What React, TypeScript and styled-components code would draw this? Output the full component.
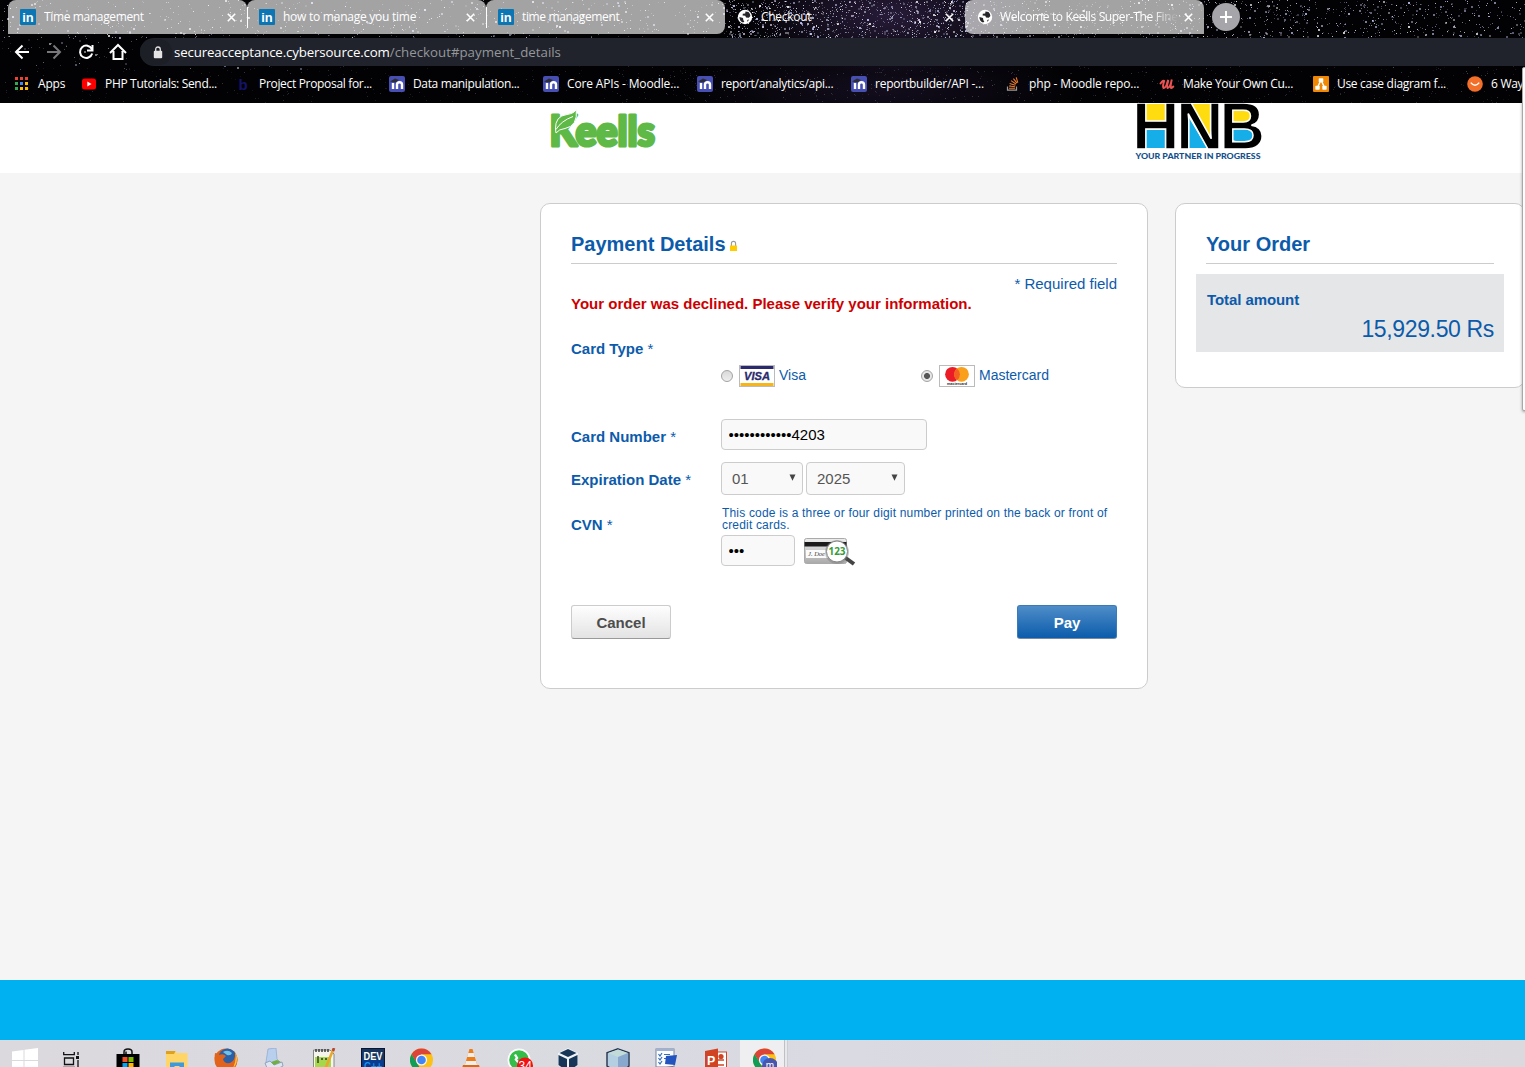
import React from "react";
import styled, { createGlobalStyle } from "styled-components";

const UI = '"Open Sans", "Noto Sans", sans-serif';
const BODY = '"Liberation Sans", Arial, sans-serif';
const BLUE = "#0c5bab";

const Global = createGlobalStyle`
  *, *::before, *::after { box-sizing: border-box; }
  body { margin: 0; background: #f5f5f5; font-family: ${BODY}; }
  svg { display: block; flex: none; }
`;

const Screen = styled.div`
  position: relative;
  width: 1525px;
  height: 1067px;
  display: flex;
  flex-direction: column;
  overflow: hidden;
`;

/* ---------- browser chrome ---------- */

const Chrome = styled.header`
  position: relative;
  height: 103px;
  flex: none;
  background: #020204;
  color: #fff;
  font-family: ${UI};
  display: flex;
  flex-direction: column;
  overflow: hidden;
`;

const Backdrop = styled.div`
  position: absolute;
  inset: 0;
  background:
    radial-gradient(ellipse 150px 60px at 890px 15px, rgba(70, 48, 100, 0.55), transparent),
    radial-gradient(ellipse 200px 50px at 880px 90px, rgba(30, 20, 45, 0.6), transparent);
`;

const TabStrip = styled.div`
  position: relative;
  display: flex;
  height: 34px;
  padding-left: 8px;
`;

const Tab = styled.div<{ $active?: boolean; $radius: string; $divider?: boolean }>`
  position: relative;
  width: ${(p) => (p.$active ? 240 : 239)}px;
  display: flex;
  align-items: center;
  padding: 0 11px 0 12px;
  border-radius: ${(p) => p.$radius};
  background: ${(p) => (p.$active ? "transparent" : "rgba(255,255,255,0.64)")};
  &::after {
    content: "";
    display: ${(p) => (p.$divider ? "block" : "none")};
    position: absolute;
    right: -1px;
    top: 7px;
    width: 1px;
    height: 21px;
    background: #fff;
  }
`;

const TabTitle = styled.span<{ $spacing: number; $fade?: boolean }>`
  flex: 1;
  margin-left: 8px;
  overflow: hidden;
  white-space: nowrap;
  font-size: 12px;
  line-height: 18px;
  letter-spacing: ${(p) => p.$spacing}px;
  ${(p) => p.$fade && "margin-left: 7px; margin-right: 4px; mask-image: linear-gradient(90deg, #000 84%, transparent 99%);"}
`;

const NewTab = styled.div`
  width: 28px;
  height: 28px;
  margin: 3px 0 0 8px;
  border-radius: 50%;
  background: #a5a5aa;
  display: grid;
  place-items: center;
`;

const Toolbar = styled.div`
  position: relative;
  display: flex;
  align-items: center;
  height: 28px;
  margin-top: 4px;
  padding-left: 13px;
`;

const NavButtons = styled.div`
  display: flex;
  gap: 14px;
  width: 127px;
`;

const Omnibox = styled.div`
  flex: 1;
  height: 28px;
  border-radius: 14px 0 0 14px;
  background: #20232b;
  display: flex;
  align-items: center;
`;

const LockChip = styled.div`
  width: 32px;
  height: 26px;
  padding-left: 4px;
  border-radius: 13px;
  background: #1c1f26;
  display: grid;
  place-items: center;
`;

const Url = styled.span`
  margin-left: 2px;
  font-size: 13.3px;
  line-height: 18px;
  letter-spacing: -0.15px;
  white-space: nowrap;
  color: #fff;
`;
const UrlPath = styled.span`
  color: #94979c;
  letter-spacing: 0;
`;

const Bookmarks = styled.div`
  position: relative;
  display: flex;
  align-items: center;
  height: 36px;
  padding-left: 14px;
`;

const Bookmark = styled.div<{ $width: number; $spacing: number }>`
  flex: none;
  width: ${(p) => p.$width}px;
  display: flex;
  align-items: center;
  gap: 8px;
  font-size: 12px;
  line-height: 18px;
  letter-spacing: ${(p) => p.$spacing}px;
  white-space: nowrap;
`;

/* ---------- checkout page ---------- */

const LogoBar = styled.div`
  height: 70px;
  flex: none;
  background: #fff;
  display: flex;
  align-items: flex-start;
  padding-left: 545px;
  gap: 470px;
`;

const Content = styled.main`
  flex: 1;
  background: #f5f5f5;
  display: flex;
  align-items: flex-start;
  gap: 27px;
  padding: 30px 0 0 540px;
`;

const Card = styled.section<{ $width: number; $height: number }>`
  flex: none;
  width: ${(p) => p.$width}px;
  height: ${(p) => p.$height}px;
  padding: 29px 30px 0;
  background: #fff;
  border: 1px solid #ccc;
  border-radius: 10px;
  color: ${BLUE};
  font-size: 15px;
`;

const Heading = styled.h2`
  margin: 0;
  height: 31px;
  border-bottom: 1px solid #ccc;
  display: flex;
  align-items: flex-start;
  gap: 3px;
  font-size: 20px;
  line-height: 23px;
  font-weight: 700;
`;

const LockSlot = styled.span`
  padding-top: 7px;
`;

const Required = styled.p`
  margin: 11px 0 0;
  text-align: right;
  line-height: 18px;
`;

const ErrorText = styled.p`
  margin: 2px 0 0;
  color: #cc0000;
  font-weight: 700;
  line-height: 18px;
  white-space: nowrap;
`;

const FormRow = styled.div<{ $height: number; $labelTop: number }>`
  display: grid;
  grid-template-columns: 150px 1fr;
  height: ${(p) => p.$height}px;
  > label { padding-top: ${(p) => p.$labelTop}px; }
`;

const Label = styled.label`
  font-weight: 700;
  line-height: 18px;
  white-space: nowrap;
`;
const Star = styled.span`
  font-weight: 400;
`;

const CardTypes = styled.div`
  display: grid;
  grid-template-columns: 200px 200px;
  align-items: start;
  padding-top: 52px;
`;

const CardOption = styled.div`
  display: flex;
  align-items: center;
  height: 22px;
  font-size: 14px;
  line-height: 20px;
`;

const CardName = styled.span`
  padding-left: 4px;
  margin-top: -2px;
`;

const Radio = styled.span<{ $checked?: boolean }>`
  width: 12px;
  height: 12px;
  margin-right: 6px;
  border: 1px solid #a3a3a3;
  border-radius: 50%;
  background: ${(p) =>
    p.$checked ? "radial-gradient(circle, #555 0 2.6px, #e6e6e6 3.4px)" : "linear-gradient(#d9d9d9, #eee)"};
`;

const Input = styled.input<{ $width: number }>`
  width: ${(p) => p.$width}px;
  height: 31px;
  padding: 0 6.5px;
  border: 1px solid #ccc;
  border-radius: 4px;
  background: #f9f9f9;
  color: #000;
  font: 15px ${BODY};
  outline: none;
`;

const Selects = styled.div`
  display: flex;
  gap: 3px;
`;

const Select = styled.div<{ $width: number }>`
  width: ${(p) => p.$width}px;
  height: 33px;
  padding: 0 6px 0 10px;
  border: 1px solid #ccc;
  border-radius: 4px;
  background: #f9f9f9;
  color: #555;
  display: flex;
  align-items: center;
  justify-content: space-between;
  line-height: 18px;
`;

const Hint = styled.p`
  margin: 0 0 4px;
  padding-left: 1px;
  width: 396px;
  font-size: 12px;
  line-height: 12px;
  letter-spacing: 0.18px;
`;

const CvnEntry = styled.div`
  display: flex;
  align-items: flex-start;
  gap: 8px;
`;

const Actions = styled.div`
  display: flex;
  justify-content: space-between;
`;

const Button = styled.button<{ $primary?: boolean }>`
  width: 100px;
  height: 34px;
  padding: 0;
  border: 1px solid ${(p) => (p.$primary ? "#3a7ab8" : "#ccc")};
  border-bottom: 1px solid ${(p) => (p.$primary ? "#778ba0" : "#999")};
  border-radius: 3px;
  background: ${(p) => (p.$primary ? "linear-gradient(#4f8dc8, #0b5cab)" : "linear-gradient(#fefefe, #e3e3e3)")};
  color: ${(p) => (p.$primary ? "#fff" : "#4d4d4d")};
  font: 700 15px ${BODY};
`;

const TotalBox = styled.div`
  width: 308px;
  height: 78px;
  margin: 10px 0 0 -10px;
  padding: 17px 10px 0 11px;
  background: #e5e6e7;
`;
const TotalLabel = styled.div`
  font-weight: 700;
  line-height: 18px;
  letter-spacing: -0.08px;
`;
const Amount = styled.div`
  margin-top: 8px;
  text-align: right;
  font-size: 23px;
  letter-spacing: -0.35px;
  line-height: 24px;
`;

const PopupEdge = styled.div`
  position: absolute;
  left: 1522px;
  top: 67px;
  width: 12px;
  height: 344px;
  background: #fff;
  border: 1px solid #a8a8a8;
  border-radius: 2px;
  box-shadow: 0 1px 3px rgba(0, 0, 0, 0.35);
`;

const Footer = styled.footer`
  flex: none;
  height: 60px;
  background: #00b1f1;
`;

/* ---------- taskbar ---------- */

const Taskbar = styled.nav`
  flex: none;
  height: 27px;
  display: flex;
  align-items: flex-start;
  overflow: hidden;
  background: linear-gradient(90deg, #dbd9de, #d9dae2 55%, #dcd9de);
`;

const TaskSlot = styled.div<{ $width: number; $open?: boolean }>`
  flex: none;
  width: ${(p) => p.$width}px;
  height: 40px;
  padding-top: 8px;
  display: flex;
  justify-content: center;
  background: ${(p) => (p.$open ? "linear-gradient(90deg, #efeff2 44px, #bfc0c6 44px 45px, #e8e8ec 45px 47px, #cccdd2 47px 48px, transparent 48px)" : "none")};
`;

/* ---------- drawings ---------- */

type Speck = { x: number; y: number; s: number; c: string; o: number };

const makeStars = (): Speck[] => {
  let seed = 4711;
  const rnd = () => {
    seed = (seed * 1103515245 + 12345) % 2147483648;
    return seed / 2147483648;
  };
  const tints = ["#ffffff", "#c9d2ff", "#9fa5c8", "#d8c8e8", "#8f93a8"];
  const out: Speck[] = [];
  const scatter = (n: number, x0: number, x1: number, y0: number, y1: number, bright: number, big = 0.85) => {
    for (let i = 0; i < n; i++) {
      out.push({
        x: Math.round(x0 + rnd() * (x1 - x0)),
        y: Math.round(y0 + rnd() * (y1 - y0)),
        s: rnd() > big ? 2 : 1,
        c: tints[Math.floor(rnd() * tints.length)],
        o: bright * (0.25 + 0.75 * rnd()),
      });
    }
  };
  scatter(560, 0, 725, 0, 38, 0.85);
  scatter(1000, 725, 970, 0, 38, 0.9);
  scatter(900, 960, 1525, 0, 38, 0.85);
  scatter(110, 0, 300, 36, 70, 0.5);
  scatter(250, 0, 700, 66, 103, 0.2, 1);
  scatter(600, 600, 1525, 66, 103, 0.25, 1);
  return out;
};
const STARS = makeStars();

const Stars = () => (
  <svg width="1525" height="103" shapeRendering="crispEdges">
    {STARS.map((s, i) => (
      <rect key={i} x={s.x} y={s.y} width={s.s} height={s.s} fill={s.c} opacity={s.o} />
    ))}
  </svg>
);

const LinkedIn = () => (
  <svg width="16" height="16" viewBox="0 0 16 16">
    <rect width="16" height="16" rx="1" fill="#0a76b4" />
    <text x="2.2" y="12.8" fontFamily="Liberation Sans" fontWeight="700" fontSize="13" textLength="11.5" lengthAdjust="spacingAndGlyphs" fill="#fff">in</text>
  </svg>
);

const Globe = () => (
  <svg width="16" height="16" viewBox="0 0 16 16">
    <circle cx="8" cy="8" r="7.200" fill="#fff" />
    <path d="M2.4 8 L6 9 L6.3 11 L7.3 12.800 L6 13.600 Q2.400 12 2.400 8Z M8.500 2.400 L11.500 3 Q13.500 5 13.400 7 L11.800 8.800 L9 8.400 L8.300 6.800 L5.600 6.600 L5.800 4.800 L8.200 4.400Z M10.300 11 L12 10.500 L10.500 13Z" fill="#26262b" />
  </svg>
);

const Cross = () => (
  <svg width="9" height="9" viewBox="0 0 9 9">
    <path d="M.8 .8 L8.2 8.2 M8.2 .8 L.8 8.2" stroke="#fff" strokeWidth="1.6" />
  </svg>
);

const NavIcon = ({ d, dim }: { d: string; dim?: boolean }) => (
  <svg width="18" height="18" viewBox="0 0 18 18" fill="none" stroke={dim ? "#77777c" : "#fff"} strokeWidth="2">
    <path d={d} />
  </svg>
);

const AppsGrid = () => (
  <svg width="16" height="16" viewBox="0 0 16 16" shapeRendering="crispEdges">
    {["#ea4335", "#ea4335", "#ea4335", "#34a853", "#4285f4", "#fbbc04", "#34a853", "#fbbc04", "#fbbc04"].map((c, i) => (
      <rect key={i} x={1 + (i % 3) * 5} y={1 + Math.floor(i / 3) * 5} width="3" height="3" fill={c} />
    ))}
  </svg>
);

const YouTube = () => (
  <svg width="16" height="16" viewBox="0 0 16 16">
    <rect x="1" y="2.5" width="14" height="11" rx="2.5" fill="#f00" />
    <path d="M6.3 5.6 L10.6 8 L6.3 10.4Z" fill="#fff" />
  </svg>
);

const LetterB = () => (
  <svg width="16" height="16" viewBox="0 0 16 16">
    <text x="3.5" y="13.500" fontFamily="Liberation Sans" fontWeight="700" fontSize="15" fill="#15126b">b</text>
  </svg>
);

const Moodle = () => (
  <svg width="16" height="16" viewBox="0 0 16 16">
    <rect width="16" height="16" rx="2" fill="#474fb3" />
    <path d="M4 13V7M8 13V8.500Q8 6.200 10.500 6.200Q13 6.200 13 8.500V13" fill="none" stroke="#fff" strokeWidth="2.400" />
    <path d="M1 5.500 L6 2.500 L10 4 L6.5 6.5Z" fill="#2e2e36" />
  </svg>
);

const StackOverflow = () => (
  <svg width="16" height="16" viewBox="0 0 16 16" fill="none">
    <path d="M2.5 10.5V14.2H11.5V10.5" stroke="#9a9a9a" strokeWidth="1.2" />
    <path d="M4 12.2H10M4 10 L10 10.8M4.6 7.4 L10.4 9.3M6 4.6 L11 8M8.4 2.6 L12 7.2M11.2 1.3 L12.8 6.6" stroke="#ef7b28" strokeWidth="1.1" />
  </svg>
);

const Udemy = () => (
  <svg width="16" height="16" viewBox="0 0 16 16">
    <path d="M1.500 7.500 Q4.600 3.600 5.200 5 Q3.300 10.500 4.600 12 Q7 12 9 5" fill="none" stroke="#eb5252" strokeWidth="2" strokeLinecap="round" />
    <path d="M9 4.600 Q7.600 10.500 8.600 12 Q11 12 12.800 3.600 Q11.200 10 12 11.800 Q12.800 12.300 14.300 10.500" fill="none" stroke="#eb5252" strokeWidth="2" strokeLinecap="round" />
  </svg>
);

const DrawIo = () => (
  <svg width="16" height="16" viewBox="0 0 16 16">
    <rect width="16" height="16" rx="1" fill="#f08705" />
    <path d="M8 4 L4.5 11.5 M8 4 L11.5 11.5" stroke="#fff" strokeWidth="1.5" />
    <rect x="5.7" y="2.2" width="4.6" height="4" rx=".7" fill="#fff" />
    <rect x="2.3" y="9.7" width="4.4" height="4" rx=".7" fill="#fff" />
    <rect x="9.3" y="9.7" width="4.4" height="4" rx=".7" fill="#fff" />
  </svg>
);

const Smile = () => (
  <svg width="16" height="16" viewBox="0 0 16 16">
    <circle cx="8" cy="8" r="7.8" fill="#f3702a" />
    <path d="M3.8 6.6 Q8 12 12.2 6.6" fill="none" stroke="#fff" strokeWidth="1.5" />
  </svg>
);

const Keells = () => (
  <svg width="115" height="50" viewBox="545 103 115 50">
    <g fill="#5fb946" stroke="#5fb946" strokeLinejoin="round">
      <text x="549.5" y="146" fontFamily="Lato" fontWeight="900" fontSize="42" strokeWidth="3.200" textLength="105.500" lengthAdjust="spacingAndGlyphs">Keells</text>
    </g>
    <path d="M555.500 129 Q555 116 567 114.500 Q574 113.500 576.300 109.500 Q578 126 565 128.500 Q559 129 556 133Z" fill="#5fb946" stroke="#fff" strokeWidth="1" />
    <path d="M556 129.500 Q561 121 573 116.500" fill="none" stroke="#fff" strokeWidth="1" />
  </svg>
);

const Hnb = () => (
  <svg width="136" height="60" viewBox="1130 103 136 60">
    <rect x="1146" y="104" width="20" height="17" fill="#ffdc0f" />
    <rect x="1146" y="130" width="20" height="18" fill="#15aee8" />
    <path d="M1191 104H1210V137Z" fill="#ffdc0f" />
    <path d="M1189 118V148H1207Z" fill="#15aee8" />
    <rect x="1231" y="110" width="22" height="12" rx="5" fill="#ffdc0f" />
    <rect x="1231" y="129" width="23" height="12" rx="5" fill="#15aee8" />
    <g fontFamily="Liberation Sans" fontWeight="700" fontSize="66" fill="#000" stroke="#fff" strokeWidth="1.5">
      <text x="1132" y="149" textLength="47.500" lengthAdjust="spacingAndGlyphs">H</text>
      <text x="1176" y="149" textLength="47.500" lengthAdjust="spacingAndGlyphs">N</text>
      <text x="1219.500" y="149" textLength="45.500" lengthAdjust="spacingAndGlyphs">B</text>
    </g>
    <text x="1135.500" y="158.800" fontFamily="Lato" fontWeight="900" fontSize="7.800" fill="#14518c" textLength="125" lengthAdjust="spacingAndGlyphs">YOUR PARTNER IN PROGRESS</text>
  </svg>
);

const GoldLock = () => (
  <svg width="9" height="12" viewBox="0 0 9 12">
    <path d="M2.400 6V3.400Q2.400 1.400 4.500 1.400Q6.600 1.400 6.600 3.400V6" fill="none" stroke="#999" strokeWidth="1.100" />
    <rect x="1" y="5.500" width="7" height="5.500" fill="#fc0" />
  </svg>
);

const VisaLogo = () => (
  <svg width="36" height="22" viewBox="0 0 36 22">
    <rect x=".5" y=".5" width="35" height="21" fill="#fff" stroke="#bbb" />
    <rect x="1.500" y="1" width="33" height="3" fill="#2a2a6c" />
    <rect x="1.500" y="18" width="33" height="3" fill="#f7b51c" />
    <text x="5" y="15" fontFamily="Liberation Sans" fontSize="11" fontWeight="700" fontStyle="italic" fill="#2a2a6c" stroke="#2a2a6c" strokeWidth=".3" textLength="26" lengthAdjust="spacingAndGlyphs">VISA</text>
  </svg>
);

const MastercardLogo = () => (
  <svg width="36" height="22" viewBox="0 0 36 22">
    <rect x=".5" y=".5" width="35" height="21" fill="#fff" stroke="#bbb" />
    <circle cx="13.500" cy="9.300" r="7.400" fill="#eb1c26" />
    <circle cx="22.500" cy="9.300" r="7.400" fill="#f99f1c" />
    <path d="M18 3.400 A7.400 7.400 0 0 1 18 15.200 A7.400 7.400 0 0 1 18 3.400Z" fill="#f26122" />
    <text x="8" y="20" fontFamily="Liberation Sans" fontWeight="700" fontSize="4" fill="#222" textLength="20" lengthAdjust="spacingAndGlyphs">mastercard</text>
  </svg>
);

const Arrow = () => (
  <svg width="7" height="9" viewBox="0 0 7 9">
    <path d="M.5 .5H6.500L3.500 6.800Z" fill="#444" />
  </svg>
);

const CvnPicture = () => (
  <svg width="54" height="31" viewBox="0 0 54 31">
    <defs>
      <linearGradient id="plate" x1="0" y1="0" x2="0" y2="1">
        <stop offset="0" stopColor="#eee" />
        <stop offset="1" stopColor="#aaa" />
      </linearGradient>
    </defs>
    <rect x="1.500" y="3.500" width="42" height="25" rx="2" fill="url(#plate)" stroke="#aaa" />
    <rect x="1.500" y="7" width="42" height="4.500" fill="#1b1b1b" />
    <rect x="3" y="15" width="22" height="8" fill="#fbfbfb" />
    <text x="5" y="21" fontFamily="Liberation Serif" fontStyle="italic" fontSize="6.500" fill="#444">J. Doe</text>
    <path d="M42 22.500 L51 29" stroke="#444" strokeWidth="4" />
    <circle cx="34" cy="17" r="12" fill="#777" opacity=".4" />
    <circle cx="34" cy="16.500" r="10.500" fill="#fff" stroke="#888" />
    <text x="25.500" y="20" fontFamily="Open Sans" fontWeight="700" fontSize="10" fill="#369b37" textLength="17" lengthAdjust="spacingAndGlyphs">123</text>
  </svg>
);

/* taskbar drawings */
const T = ({ children, w = 24 }: { children: React.ReactNode; w?: number }) => (
  <svg width={w} height="24" viewBox={`0 0 ${w} 24`}>{children}</svg>
);

const WindowsIcon = () => (
  <T w={26}>
    <path d="M0 3.500 L11.500 2V12H0Z M12.500 1.800 L26 0V12H12.500Z M0 13H11.500V24H0Z M12.500 13H26V24H12.500Z" fill="#fff" />
  </T>
);
const TaskView = () => (
  <T w={16}>
    <path d="M.7 4V6.700H11.300V4M1.500 10H10.500V16.500H1.500ZM.7 23V19.500H11.300V23M15 4V7M15 12V24" fill="none" stroke="#111" strokeWidth="1.300" />
    <rect x="13" y="8" width="3" height="3" fill="#111" />
  </T>
);
const Store = () => (
  <T>
    <path d="M8 7V4Q8 1 12 1Q16 1 16 4V7M10 7V3.500" fill="none" stroke="#111" strokeWidth="1.500" />
    <path d="M.5 6H23.500V24H.5Z" fill="#000" />
    <rect x="6.500" y="9" width="5" height="5" fill="#f25022" />
    <rect x="12.500" y="9" width="5" height="5" fill="#7fba00" />
    <rect x="6.500" y="15" width="5" height="5" fill="#00a4ef" />
    <rect x="12.500" y="15" width="5" height="5" fill="#ffb900" />
  </T>
);
const Explorer = () => (
  <T>
    <path d="M1 3H10L12 5H22.500V24H1Z" fill="#ffd567" />
    <path d="M1 3H10.500L9 6H1Z" fill="#e0a11a" />
    <path d="M5 24V14.500H19V24H14.500V18H9.500V24Z" fill="#3c9bdc" />
  </T>
);
const Firefox = () => (
  <T>
    <circle cx="12" cy="12" r="11.500" fill="#e2641a" />
    <circle cx="13.500" cy="9.500" r="9" fill="#2d5fa5" />
    <path d="M9 4Q14 1 18 5Q17 8 13 7Z" fill="#6fc2e4" />
    <path d="M1 5Q3 5 5 7Q9 5 12 8L9 11Q10 16 16 15Q22 12 21 4Q25 11 22 18Q17 25 8 23Q-1 18 1 5Z" fill="#e2641a" />
    <path d="M21 4Q25 11 21 18L19 20Q23 12 21 4Z" fill="#fcc53c" />
  </T>
);
const Scanner = () => (
  <T>
    <path d="M5 1L13 0L14 11L18 15L10 18L3 14Z" fill="#b9cfee" stroke="#8ba7d2" strokeWidth=".7" />
    <path d="M2 15L7 13L11 17L19 14L20 18L10 23L4 20Z" fill="#dce5f0" stroke="#7e95b5" strokeWidth=".8" />
    <path d="M8 14L14 12L18 14L11 17Z" fill="#73ae41" />
  </T>
);
const NotepadPP = () => (
  <T>
    <path d="M1.500 2H18L22 6V24H1.500Z" fill="#f5f5ee" stroke="#888" />
    <path d="M3 9H19V24H3Z" fill="#a6d84b" />
    <path d="M4 1V4M7 1V4M10 1V4M13 1V4M16 1V4M6 8V15M9 11H11M13 11H15" stroke="#333" strokeWidth="1.400" />
    <path d="M21.500 1L14 19L12 22" stroke="#e7a92d" strokeWidth="2.600" fill="none" />
    <path d="M22 0L21 3" stroke="#b54635" strokeWidth="2.600" />
  </T>
);
const DevCpp = () => (
  <T>
    <rect x=".5" y=".5" width="23" height="26" fill="#16365f" stroke="#0a1630" />
    <rect x="1.500" y="12" width="21" height="12" fill="#073c91" />
    <text x="2.500" y="11.500" fontFamily="Liberation Sans" fontWeight="700" fontSize="10.500" textLength="19" lengthAdjust="spacingAndGlyphs" fill="#fff">DEV</text>
    <text x="3" y="22" fontFamily="Liberation Sans" fontWeight="700" fontSize="11" textLength="18" lengthAdjust="spacingAndGlyphs" fill="#1595ef">C++</text>
  </T>
);
const ChromeIcon = ({ badge }: { badge?: boolean }) => (
  <T>
    <circle cx="11.500" cy="12" r="11.500" fill="#fbc116" />
    <path d="M1.500 6.300A11.500 11.500 0 0 1 21.500 6.300H11.500L6.500 14.500Z" fill="#db4437" />
    <path d="M1.500 6.300L7 15L12 23.500A11.500 11.500 0 0 1 1.500 6.300Z" fill="#109d58" />
    <circle cx="11.500" cy="12" r="5.600" fill="#f5f5f5" />
    <circle cx="11.500" cy="12" r="4.300" fill="#4285f4" />
    {badge && (
      <>
        <circle cx="17" cy="18" r="8" fill="#4757b0" />
        <text x="12.800" y="21" fontFamily="Liberation Sans" fontSize="10" fill="#fff">m</text>
      </>
    )}
  </T>
);
const Vlc = () => (
  <T>
    <path d="M10.500 1H13.500L18.500 18H5.500Z" fill="#f07c15" />
    <path d="M9.300 5H14.700L15.900 9H8.100Z M7 13H17L18.200 17H5.800Z" fill="#eee" />
    <path d="M4 17H20L22 24H2Z" fill="#dd690d" />
  </T>
);
const WhatsApp = () => (
  <svg width="26" height="24" viewBox="0 0 26 24">
    <circle cx="12" cy="12" r="11.500" fill="#fff" />
    <circle cx="12" cy="12" r="9.800" fill="#35bd49" />
    <path d="M8 6.500L10 10L8.800 11.500Q11 15 14 16" fill="none" stroke="#fff" strokeWidth="2.300" />
    <circle cx="18" cy="17.500" r="8" fill="#f11212" />
    <text x="11.500" y="22" fontFamily="Liberation Sans" fontSize="12" fill="#fff">34</text>
  </svg>
);
const VBox = () => (
  <T>
    <path d="M11 0L21 5V17L11 24L1 17V5Z" fill="#eff3f6" />
    <path d="M11 1L19.500 5L11 9L2.500 5Z M1.500 7L10 11V23L1.500 17Z M20.500 7L12 11V23L20.500 17Z" fill="#173557" />
  </T>
);
const Cube = () => (
  <T>
    <path d="M12 .8L23 4.800V18L12 25L1 18V4.800Z" fill="#b5cfe2" stroke="#24344e" strokeWidth="1.400" />
    <path d="M12 1.500L22 5L12 9L2 5Z" fill="#c3dbd8" />
    <path d="M12 9L22 5V18L12 24Z" fill="#88a8ce" />
  </T>
);
const Config = () => (
  <T>
    <rect x="1" y="1" width="18" height="18" fill="#fbfcff" stroke="#7584a1" />
    <path d="M1 2H19" stroke="#9fb2d2" strokeWidth="2" />
    <path d="M3.500 6L5 8L7 5M3.500 10L5 12L7 9M3.500 14L5 16L7 13M9 6.500H15M9 10.500H13" fill="none" stroke="#356eb5" strokeWidth="1.200" />
    <path d="M11 8L22 7L20 17L10 16Z" fill="#2353bd" />
    <path d="M11 19L18 18L20 22H10Z" fill="#6f7784" />
  </T>
);
const PowerPoint = () => (
  <T>
    <rect x="10" y="4" width="12.500" height="20" fill="#fff" stroke="#d04424" />
    <path d="M13 12H20M13 17H20M13 20H20" stroke="#d04424" strokeWidth="1.400" />
    <circle cx="17" cy="8.500" r="2.600" fill="#d04424" />
    <path d="M1 3L14 .5V26L1 23Z" fill="#d04424" />
    <text x="3" y="17" fontFamily="Liberation Sans" fontWeight="700" fontSize="12.500" fill="#fff">P</text>
  </T>
);

/* ---------- page ---------- */

const tabs = [
  { title: "Time management", spacing: -0.36, icon: <LinkedIn />, radius: "8px 8px 0 0", divider: true },
  { title: "how to manage you time", spacing: -0.25, icon: <LinkedIn />, radius: "8px 8px 0 0", divider: true },
  { title: "time management", spacing: -0.36, icon: <LinkedIn />, radius: "8px 8px 8px 0" },
  { title: "Checkout", spacing: -0.3, icon: <Globe />, radius: "0", active: true },
  { title: "Welcome to Keells Super-The Finest", spacing: -0.36, icon: <Globe />, radius: "8px 8px 0 8px", fade: true },
];

const bookmarks = [
  { text: "Apps", icon: <AppsGrid />, width: 67, spacing: -0.2 },
  { text: "PHP Tutorials: Send...", icon: <YouTube />, spacing: -0.32 },
  { text: "Project Proposal for...", icon: <LetterB />, spacing: -0.32 },
  { text: "Data manipulation...", icon: <Moodle />, spacing: -0.35 },
  { text: "Core APIs - Moodle...", icon: <Moodle />, spacing: -0.15 },
  { text: "report/analytics/api...", icon: <Moodle />, spacing: -0.3 },
  { text: "reportbuilder/API -...", icon: <Moodle />, spacing: -0.24 },
  { text: "php - Moodle repo...", icon: <StackOverflow />, spacing: -0.15 },
  { text: "Make Your Own Cu...", icon: <Udemy />, spacing: -0.34 },
  { text: "Use case diagram f...", icon: <DrawIo />, spacing: -0.3 },
  { text: "6 Ways", icon: <Smile />, spacing: -0.3 },
];

const apps = [Store, Explorer, Firefox, Scanner, NotepadPP, DevCpp, ChromeIcon, Vlc, WhatsApp, VBox, Cube, Config, PowerPoint];

export default function App() {
  return (
    <Screen>
      <Global />
      <Chrome>
        <Backdrop><Stars /></Backdrop>
        <TabStrip>
          {tabs.map((t, i) => (
            <Tab key={i} $active={t.active} $radius={t.radius} $divider={t.divider}>
              {t.icon}
              <TabTitle $spacing={t.spacing} $fade={t.fade}>{t.title}</TabTitle>
              <Cross />
            </Tab>
          ))}
          <NewTab>
            <svg width="14" height="14" viewBox="0 0 14 14"><path d="M7 1V13M1 7H13" stroke="#fff" strokeWidth="2" /></svg>
          </NewTab>
        </TabStrip>
        <Toolbar>
          <NavButtons>
            <NavIcon d="M16 9H3M9.500 2.500L3 9L9.500 15.500" />
            <NavIcon dim d="M2 9H15M8.500 2.500L15 9L8.500 15.500" />
            <NavIcon d="M14.800 6A6.200 6.200 0 1 0 15.200 10.500M15.500 2V7.500H10" />
            <NavIcon d="M1 10L9 2L17 10M4.500 8V16H13.500V8" />
          </NavButtons>
          <Omnibox>
            <LockChip>
              <svg width="10" height="13" viewBox="0 0 10 13">
                <path d="M2.700 6V3.500Q2.700 1 5 1Q7.300 1 7.300 3.500V6" fill="none" stroke="#e4e4e4" strokeWidth="1.300" />
                <rect x=".8" y="4.800" width="8.400" height="7.400" rx="1" fill="#e4e4e4" />
              </svg>
            </LockChip>
            <Url>secureacceptance.cybersource.com<UrlPath>/checkout#payment_details</UrlPath></Url>
          </Omnibox>
        </Toolbar>
        <Bookmarks>
          {bookmarks.map((b) => (
            <Bookmark key={b.text} $width={b.width ?? 154} $spacing={b.spacing}>
              {b.icon}
              {b.text}
            </Bookmark>
          ))}
        </Bookmarks>
      </Chrome>

      <LogoBar>
        <Keells />
        <Hnb />
      </LogoBar>

      <Content>
        <Card $width={608} $height={486}>
          <Heading>Payment Details<LockSlot><GoldLock /></LockSlot></Heading>
          <Required>* Required field</Required>
          <ErrorText>Your order was declined. Please verify your information.</ErrorText>
          <FormRow $height={106} $labelTop={27}>
            <Label>Card Type <Star>*</Star></Label>
            <CardTypes>
              <CardOption>
                <Radio /><VisaLogo /><CardName>Visa</CardName>
              </CardOption>
              <CardOption>
                <Radio $checked /><MastercardLogo /><CardName>Mastercard</CardName>
              </CardOption>
            </CardTypes>
          </FormRow>
          <FormRow $height={43} $labelTop={9}>
            <Label>Card Number <Star>*</Star></Label>
            <Input $width={206} readOnly value="••••••••••••4203" />
          </FormRow>
          <FormRow $height={45} $labelTop={9}>
            <Label>Expiration Date <Star>*</Star></Label>
            <Selects>
              <Select $width={82}>01<Arrow /></Select>
              <Select $width={99}>2025<Arrow /></Select>
            </Selects>
          </FormRow>
          <FormRow $height={98} $labelTop={9}>
            <Label>CVN <Star>*</Star></Label>
            <div>
              <Hint>This code is a three or four digit number printed on the back or front of credit cards.</Hint>
              <CvnEntry>
                <Input $width={74} readOnly value="•••" />
                <CvnPicture />
              </CvnEntry>
            </div>
          </FormRow>
          <Actions>
            <Button>Cancel</Button>
            <Button $primary>Pay</Button>
          </Actions>
        </Card>
        <Card $width={350} $height={185}>
          <Heading>Your Order</Heading>
          <TotalBox>
            <TotalLabel>Total amount</TotalLabel>
            <Amount>15,929.50 Rs</Amount>
          </TotalBox>
        </Card>
      </Content>
      <Footer />
      <Taskbar>
        <TaskSlot $width={50}><WindowsIcon /></TaskSlot>
        <TaskSlot $width={42}><TaskView /></TaskSlot>
        <TaskSlot $width={11} />
        {apps.map((Icon, i) => (
          <TaskSlot key={i} $width={49}><Icon /></TaskSlot>
        ))}
        <TaskSlot $width={49} $open><ChromeIcon badge /></TaskSlot>
      </Taskbar>
      <PopupEdge />
    </Screen>
  );
}
